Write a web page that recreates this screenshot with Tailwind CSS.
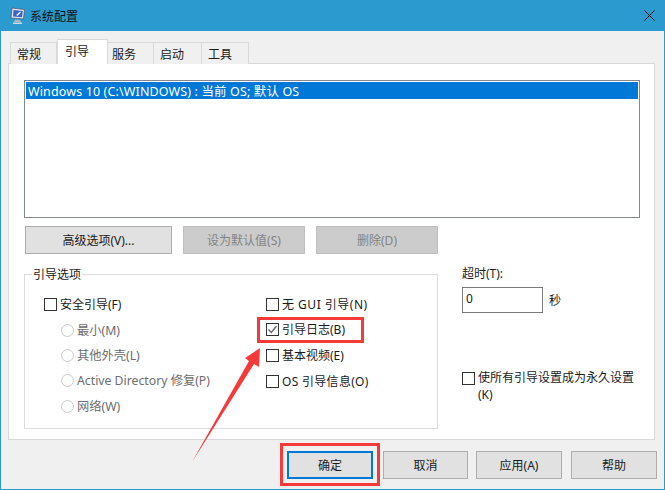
<!DOCTYPE html>
<html lang="zh"><head><meta charset="utf-8">
<script src="https://cdn.jsdelivr.net/npm/@tailwindcss/browser@4"></script>
</head>
<body class="m-0 w-[665px] h-[490px] overflow-hidden">
<div class="relative w-[665px] h-[490px] flex flex-col bg-[#f0f0f0] border-x border-b border-[#2b9bcf] text-[12px] leading-[16px] text-[#1a1a1a] font-['Noto_Sans','Noto_Sans_CJK_SC',sans-serif]">
  <div class="h-[31px] -mx-px bg-[#2b9bcf] flex items-center shrink-0 pl-[10px] pr-[10px]">
    <svg width="15" height="18" viewBox="0 0 15 18" class="mr-[5px]"><path d="M2 1L14.500 2.500L13.500 12L1 11Z" fill="#e4e8f2" stroke="#4e5872" stroke-width="0.8"/><path d="M3.500 3L12.800 4L12 10.300L3 9.500Z" fill="#3f5fc8"/><path d="M6 8L10 4.500L11 5.500L7.500 9Z" fill="#dfe8fa"/><path d="M5 12.500L10 13L11 15L4 15Z" fill="#aeb4c0"/><path d="M3 15.500H12V17H3Z" fill="#d5d8de"/></svg>
    <span class="text-[#111] pt-[2px]">系统配置</span>
    <svg width="11" height="11" viewBox="0 0 11 11" class="ml-auto"><path d="M.5.5l10 10M10.500.5l-10 10" stroke="#000" fill="none"/></svg>
  </div>
  <div class="flex flex-col pl-[7px] pr-[10px] pt-[9px] grow">
    <div class="flex items-end h-[24px] pl-[2px] relative z-10">
      <div class="w-[47px] h-[22px] bg-[#f0f0f0] border border-b-0 border-[#d9d9d9] pl-[6px] pt-[4px]">常规</div>
      <div class="w-[51px] h-[25px] bg-white border border-b-0 border-[#d9d9d9] pl-[7px] pt-[4px]">引导</div>
      <div class="w-[46px] h-[22px] bg-[#f0f0f0] border border-b-0 border-l-0 border-[#d9d9d9] pl-[4px] pt-[4px]">服务</div>
      <div class="w-[48px] h-[22px] bg-[#f0f0f0] border border-b-0 border-l-0 border-[#d9d9d9] pl-[6px] pt-[4px]">启动</div>
      <div class="w-[47px] h-[22px] bg-[#f0f0f0] border border-b-0 border-l-0 border-[#d9d9d9] pl-[6px] pt-[4px]">工具</div>
    </div>
    <div class="w-[647px] h-[377px] bg-white border border-[#d9d9d9] pl-[15px] pt-[16px] -mt-px">
      <div class="w-[616px] h-[138px] border border-[#828790] p-px">
        <div class="h-[17px] bg-[#0078d7] text-white pl-[2px] pt-[2px] text-[12.5px] leading-[16px] tracking-[0.13px]">Windows 10 (C:\WINDOWS) : 当前 OS; 默认 OS</div>
      </div>
      <div class="flex mt-[8px] ml-px">
        <div class="w-[147px] h-[28px] pt-[2px] bg-[#e1e1e1] border border-[#adadad] flex items-center justify-center">高级选项(V)...</div>
        <div class="w-[122px] h-[28px] pt-[2px] ml-[11px] bg-[#cccccc] border border-[#bfbfbf] text-[#838383] flex items-center justify-center">设为默认值(S)</div>
        <div class="w-[122px] h-[28px] pt-[2px] ml-[11px] bg-[#cccccc] border border-[#bfbfbf] text-[#838383] flex items-center justify-center">删除(D)</div>
      </div>
      <div class="flex mt-[12px]">
        <div class="relative mt-[8px] w-[414px] h-[155px] border border-[#dcdcdc] flex pl-[19px] pt-[21px]">
          <span class="absolute left-[7px] -top-[8px] bg-white px-px">引导选项</span>
          <div class="w-[222px] flex flex-col">
            <div class="h-[16px] flex items-center"><span class="w-[13px] h-[13px] border border-[#333] bg-white mr-[3px]"></span><span class="pt-[1px]">安全引导(F)</span></div>
            <div class="text-[#6d6d6d] pl-[17px] mt-[10px] flex flex-col gap-[9.4px] text-[12.25px]">
              <div class="h-[16px] flex items-center"><span class="w-[13px] h-[13px] rounded-full border border-[#cccccc] mr-[3px]"></span><span class="pt-[1px]">最小(M)</span></div>
              <div class="h-[16px] flex items-center"><span class="w-[13px] h-[13px] rounded-full border border-[#cccccc] mr-[3px]"></span><span class="pt-[1px]">其他外壳(L)</span></div>
              <div class="h-[16px] flex items-center"><span class="w-[13px] h-[13px] rounded-full border border-[#cccccc] mr-[3px]"></span><span class="pt-[1px]">Active Directory 修复(P)</span></div>
              <div class="h-[16px] flex items-center"><span class="w-[13px] h-[13px] rounded-full border border-[#cccccc] mr-[3px]"></span><span class="pt-[1px]">网络(W)</span></div>
            </div>
          </div>
          <div class="flex flex-col gap-[9.8px]">
            <div class="h-[16px] flex items-center"><span class="w-[13px] h-[13px] border border-[#333] bg-white mr-[3px]"></span><span class="pt-[1px] tracking-[0.5px]">无 GUI 引导(N)</span></div>
            <div class="h-[16px] flex items-center"><span class="w-[13px] h-[13px] border border-[#333] bg-white mr-[3px] flex items-center justify-center"><svg width="11" height="11" viewBox="0 0 11 11"><path d="M1.500 5.500l2.800 3L9.500 2" stroke="#666" stroke-width="1.400" fill="none"/></svg></span><span class="pt-[1px]">引导日志(B)</span></div>
            <div class="h-[16px] flex items-center"><span class="w-[13px] h-[13px] border border-[#333] bg-white mr-[3px]"></span><span class="pt-[1px]">基本视频(E)</span></div>
            <div class="h-[16px] flex items-center"><span class="w-[13px] h-[13px] border border-[#333] bg-white mr-[3px]"></span><span class="pt-[1px] tracking-[0.3px]">OS 引导信息(O)</span></div>
          </div>
        </div>
        <div class="ml-[24px] flex flex-col w-[180px]">
          <div class="h-[16px]">超时(T):</div>
          <div class="flex items-center mt-[5px]">
            <div class="w-[81px] h-[26px] border border-[#7a7a7a] pl-[3px] pt-[3px]">0</div>
            <span class="ml-[6px] pt-[2px]">秒</span>
          </div>
          <div class="flex items-start mt-[56px]">
            <span class="w-[13px] h-[13px] border border-[#333] bg-white mr-[3px] mt-[3px] shrink-0"></span>
            <span class="leading-[17px] w-[160px]">使所有引导设置成为永久设置(K)</span>
          </div>
        </div>
      </div>
    </div>
    <div class="flex pt-[11px] pl-[279px]">
      <div class="w-[86px] shrink-0 h-[28px] pt-[2px] bg-[#e1e1e1] border-2 border-[#0078d7] flex items-center justify-center">确定</div>
      <div class="w-[85px] shrink-0 h-[28px] pt-[2px] ml-[10px] bg-[#e1e1e1] border border-[#adadad] flex items-center justify-center">取消</div>
      <div class="w-[86px] shrink-0 h-[28px] pt-[2px] ml-[8px] bg-[#e1e1e1] border border-[#adadad] flex items-center justify-center">应用(A)</div>
      <div class="w-[86px] shrink-0 h-[28px] pt-[2px] ml-[9px] bg-[#e1e1e1] border border-[#adadad] flex items-center justify-center">帮助</div>
    </div>
  </div>
  <div class="absolute left-[256px] top-[317px] w-[107px] h-[26px] border-[3px] border-[#f63a3a]"></div>
  <div class="absolute left-[279px] top-[443px] w-[100px] h-[43px] border-[3px] border-[#f63a3a]"></div>
  <svg class="absolute left-0 top-0" width="665" height="490" viewBox="0 0 665 490"><path d="M191 462L248 361L244 358L259 348L258 367L253 364Z" fill="#f63a3a"/></svg>
</div>
</body></html>
